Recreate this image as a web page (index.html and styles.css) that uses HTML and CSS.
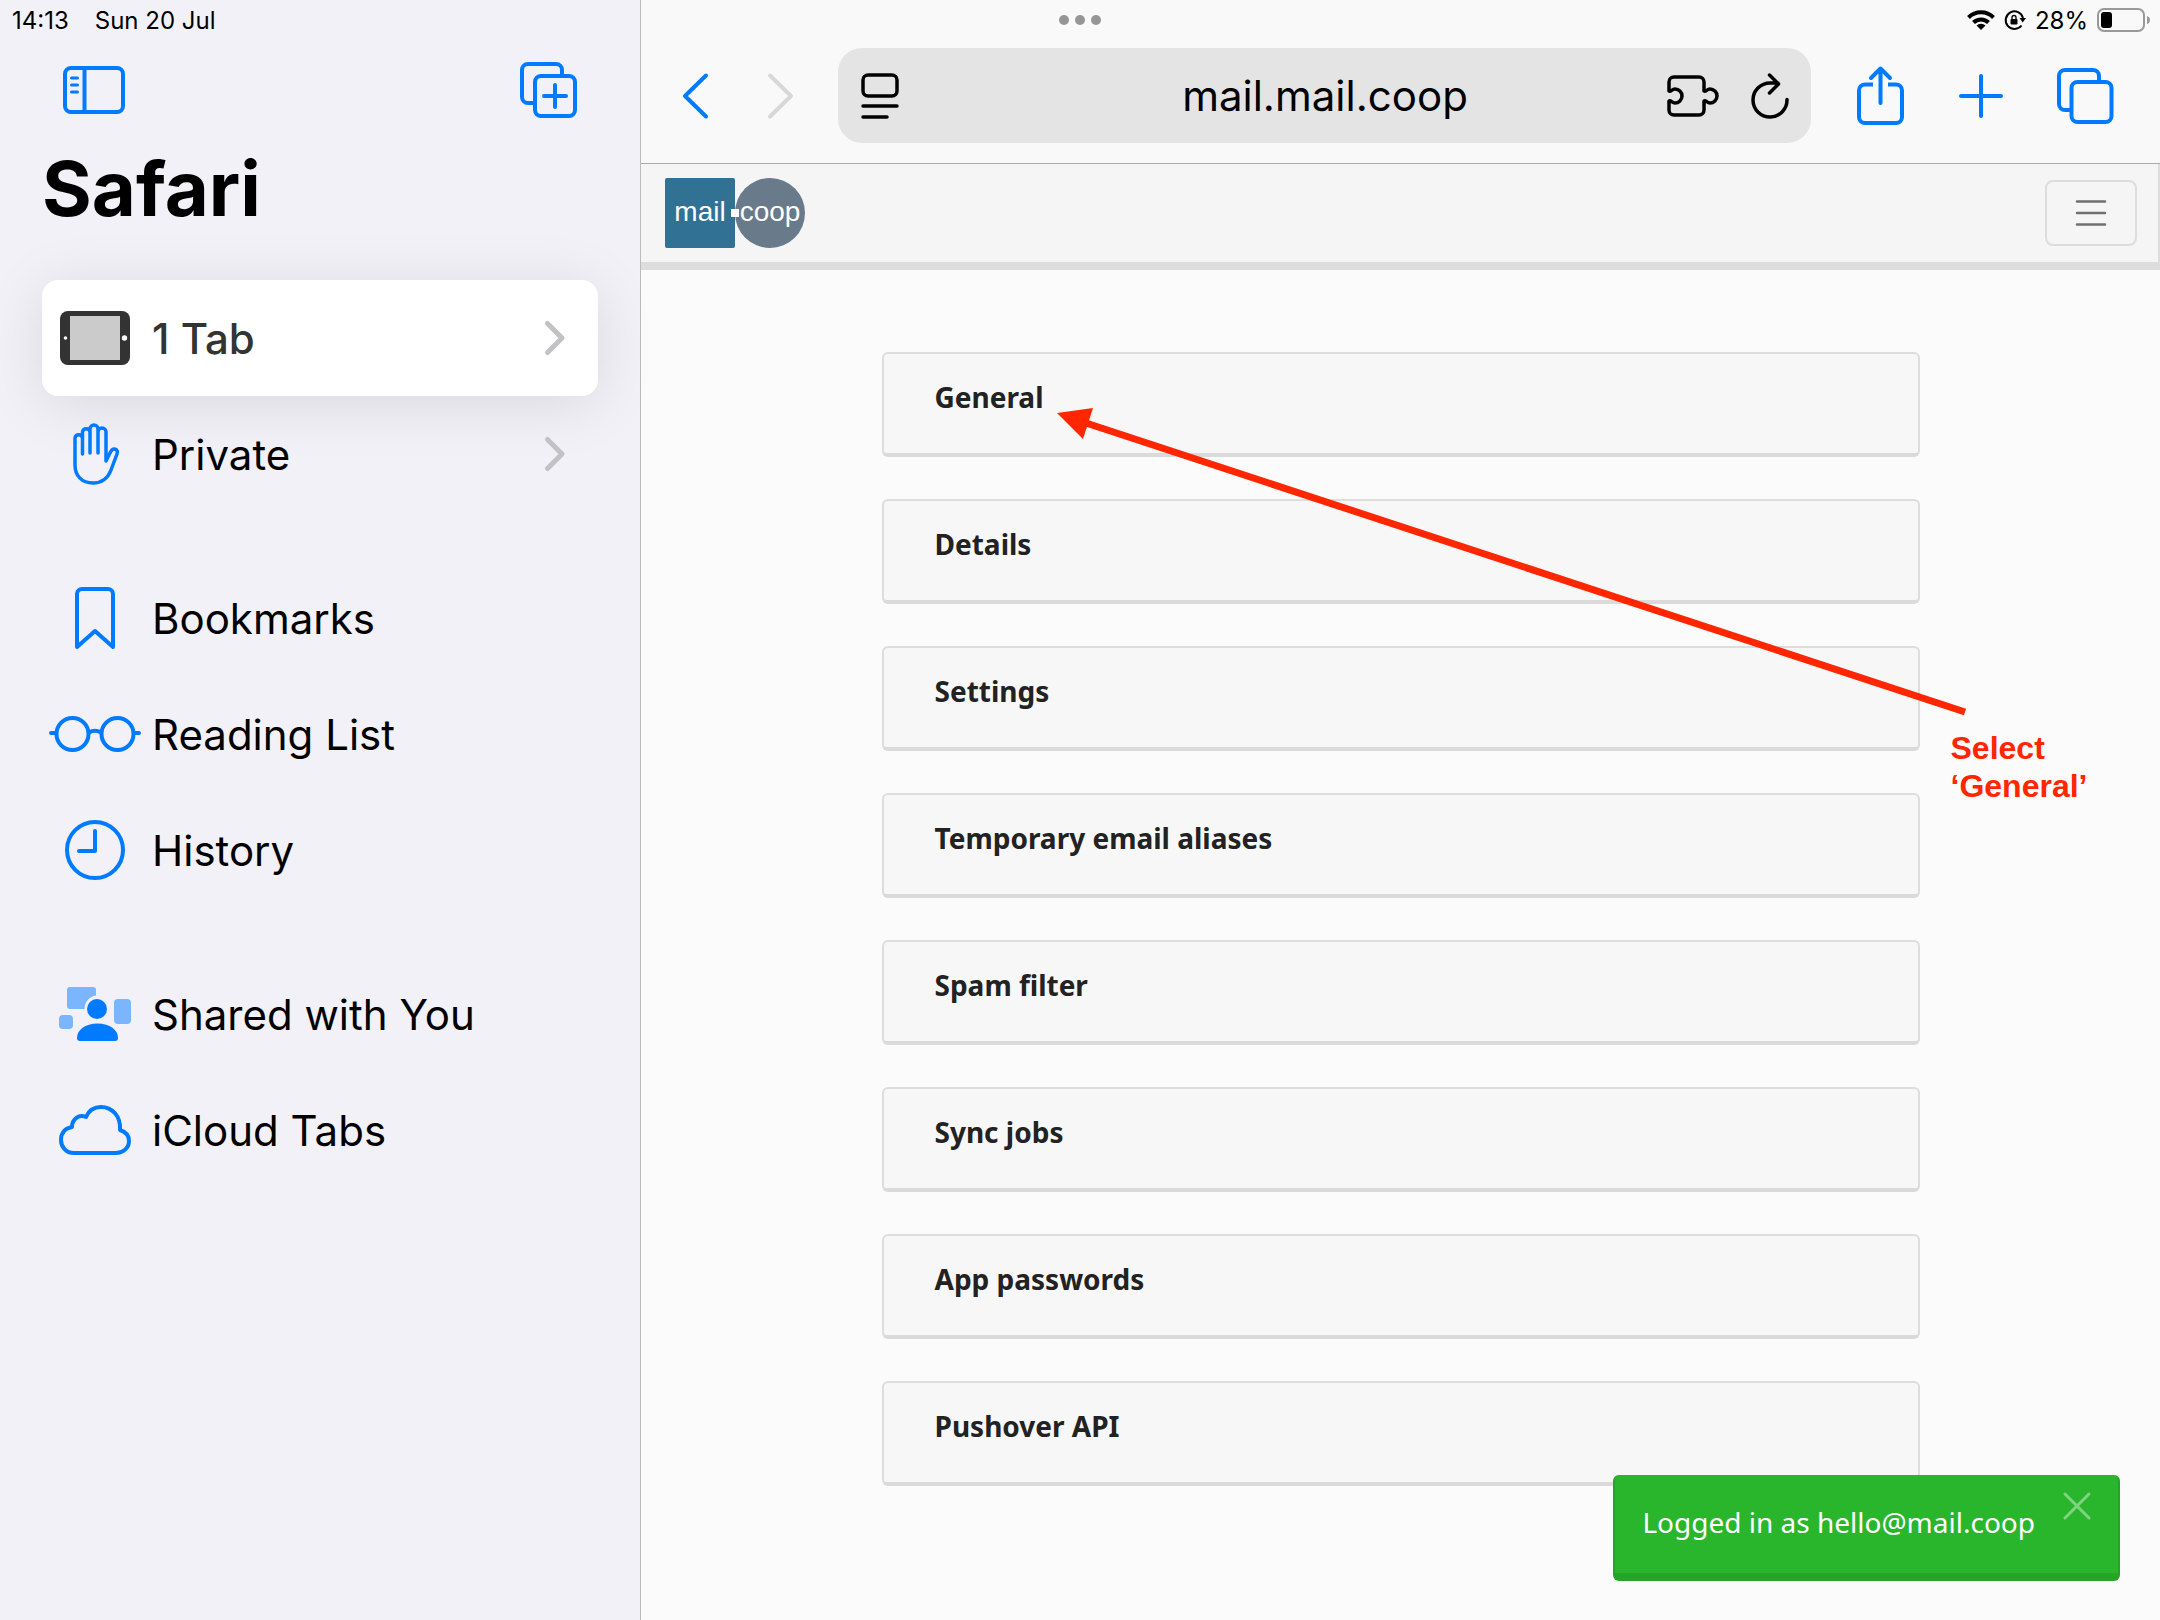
FILE: index.html
```html
<!DOCTYPE html>
<html lang="en">
<head>
    <meta charset="UTF-8">
    <meta name="viewport" content="width=device-width, initial-scale=1.0">
    <title>mail.mail.coop</title>
    <link rel="stylesheet" href="styles.css">
</head>
<body>
    <div class="app">
        <aside class="sidebar">
            <div class="status">
                <span>14:13</span>
                <span>Sun 20 Jul</span>
            </div>
            <div class="sidebar-tools">
                <button class="icon-btn" aria-label="Hide sidebar">
                    <svg width="62" height="48" viewBox="0 0 62 48" fill="none" stroke="currentColor" stroke-width="4">
                        <rect x="2" y="2" width="58" height="44" rx="6"/>
                        <path d="M21.500 2v44"/>
                        <path d="M8.500 12h6M8.500 19h6M8.500 26h6" stroke-width="3" stroke-linecap="round"/>
                    </svg>
                </button>
                <button class="icon-btn" aria-label="New tab group">
                    <svg width="58" height="56" viewBox="0 0 58 56" fill="none" stroke="currentColor" stroke-width="4">
                        <path d="M14 41H8a6 6 0 0 1-6-6V8a6 6 0 0 1 6-6h28a6 6 0 0 1 6 6v5"/>
                        <rect x="15" y="14" width="40" height="40" rx="6"/>
                        <path d="M35 23v22M24 34h22" stroke-linecap="round"/>
                    </svg>
                </button>
            </div>
            <h1>Safari</h1>
            <nav>
                <ul class="menu">
                    <li>
                        <a class="menu-item active" href="#tabs">
                            <svg width="70" height="54" viewBox="0 0 70 54">
                                <rect width="70" height="54" rx="8" fill="#333"/>
                                <rect x="10" y="5" width="50" height="44" fill="#cbcbcb"/>
                                <circle cx="5.500" cy="27" r="1.800" fill="#fff"/>
                                <circle cx="64.500" cy="27" r="2.700" fill="#fff"/>
                            </svg>
                            <span>1 Tab</span>
                            <svg class="chevron" width="20" height="34" viewBox="0 0 20 34"><path d="M2.500 2.500L17 17L2.500 31.500"/></svg>
                        </a>
                    </li>
                    <li>
                        <a class="menu-item" href="#private">
                            <svg class="line thin" width="46" height="62" viewBox="-1 0 46 62">
                                <path d="M9.500 31V15a3.800 3.800 0 0 0-7.500 0V42C2 53 9 60 20 60C30 60 35 55 38 47L44 31c2-5-4-7-6.500-2L33 38V9a4 4 0 0 0-8 0M25 30V6a4 4 0 0 0-8 0V30M17 9a3.800 3.800 0 0 0-7.500 0V20"/>
                            </svg>
                            <span>Private</span>
                            <svg class="chevron" width="20" height="34" viewBox="0 0 20 34"><path d="M2.500 2.500L17 17L2.500 31.500"/></svg>
                        </a>
                    </li>
                </ul>
                <ul class="menu">
                    <li>
                        <a class="menu-item" href="#bookmarks">
                            <svg class="line" width="40" height="62" viewBox="0 0 40 62">
                                <path d="M2 60V7a5 5 0 0 1 5-5h26a5 5 0 0 1 5 5v53L20 44z"/>
                            </svg>
                            <span>Bookmarks</span>
                        </a>
                    </li>
                    <li>
                        <a class="menu-item" href="#reading-list">
                            <svg class="line" width="92" height="36" viewBox="0 0 92 36">
                                <circle cx="23.500" cy="18" r="16"/>
                                <circle cx="68.500" cy="18" r="16"/>
                                <path d="M2 17h5M85 17h5M40 16.500q6-3.500 12 0"/>
                            </svg>
                            <span>Reading List</span>
                        </a>
                    </li>
                    <li>
                        <a class="menu-item" href="#history">
                            <svg class="line" width="60" height="60" viewBox="0 0 60 60">
                                <circle cx="30" cy="30" r="28"/>
                                <path d="M30 11v20H14"/>
                            </svg>
                            <span>History</span>
                        </a>
                    </li>
                </ul>
                <ul class="menu">
                    <li>
                        <a class="menu-item" href="#shared">
                            <svg width="72" height="54" viewBox="0 0 72 54" fill="#007aff">
                                <path d="M11 0h23a3 3 0 0 1 3 3v5.500A13.500 13.500 0 0 0 25.500 22H11a3 3 0 0 1-3-3V3a3 3 0 0 1 3-3z" fill="#7ab5fe"/>
                                <rect x="55" y="12" width="17" height="25" rx="4" fill="#7ab5fe"/>
                                <rect y="28" width="14" height="14" rx="4" fill="#7ab5fe"/>
                                <circle cx="38" cy="22" r="10"/>
                                <path d="M21 54a3 3 0 0 1-3-3c0-8 8-14.500 20.500-14.500S59 43 59 51a3 3 0 0 1-3 3z"/>
                            </svg>
                            <span>Shared with You</span>
                        </a>
                    </li>
                    <li>
                        <a class="menu-item" href="#icloud">
                            <svg class="line" width="72" height="50" viewBox="0 0 72 50">
                                <path d="M15 48C7 48 2 42 2 35c0-7 4-12 11-13c0-8 7-13 14-10C30 5 36 2 42 2c11 0 20 9 19 23c6 2 9 6 9 11c0 7-6 12-13 12z"/>
                            </svg>
                            <span>iCloud Tabs</span>
                        </a>
                    </li>
                </ul>
            </nav>
        </aside>

        <div class="browser">
            <header class="chrome">
                <div class="status status-right">
                    <svg class="dots" width="42" height="10" viewBox="0 0 42 10" fill="#969696">
                        <circle cx="5" cy="5" r="5"/><circle cx="21" cy="5" r="5"/><circle cx="37" cy="5" r="5"/>
                    </svg>
                    <svg width="28" height="20" viewBox="0 0 28 20" fill="none" stroke="#000" stroke-width="4">
                        <path d="M1.500 7.500a17.700 17.700 0 0 1 25 0M6.500 12.500a10.600 10.600 0 0 1 15 0"/>
                        <path d="M14 20l-4.500-4.500a6.400 6.400 0 0 1 9 0z" fill="#000" stroke="none"/>
                    </svg>
                    <svg width="22" height="20" viewBox="0 0 22 20" fill="none" stroke="#000" stroke-width="2">
                        <path d="M17.500 15.500A8.800 8.800 0 1 1 19 8"/>
                        <path d="M15.500 8h6.500l-3.300 4.500z" fill="#000" stroke="none"/>
                        <rect x="6.500" y="9" width="7" height="5.500" rx="1" fill="#000" stroke="none"/>
                        <path d="M8 9.500V7.500a2 2 0 0 1 4 0v2" stroke-width="1.300"/>
                    </svg>
                    <span>28%</span>
                    <svg width="54" height="24" viewBox="0 0 54 24">
                        <rect x="1" y="1" width="46" height="22" rx="6" fill="none" stroke="#999" stroke-width="2"/>
                        <rect x="4" y="4" width="11" height="16" rx="3"/>
                        <path d="M50 8v8q3-1 3-4t-3-4z" fill="#999"/>
                    </svg>
                </div>
                <div class="toolbar">
                    <button class="icon-btn" aria-label="Back">
                        <svg class="line" width="26" height="46" viewBox="0 0 26 46"><path d="M24 2.500L3 23L24 43.500"/></svg>
                    </button>
                    <button class="icon-btn forward" aria-label="Forward" disabled>
                        <svg class="line" width="26" height="46" viewBox="0 0 26 46"><path d="M2 2.500L23 23L2 43.500"/></svg>
                    </button>
                    <div class="address">
                        <button class="icon-btn dark" aria-label="Page menu">
                            <svg width="38" height="46" viewBox="0 0 38 46" fill="none" stroke="currentColor" stroke-width="3.500" stroke-linecap="round">
                                <rect x="2" y="2" width="34" height="21" rx="5"/>
                                <path d="M2 33h34M2 44h24"/>
                            </svg>
                        </button>
                        <input type="text" value="mail.mail.coop" aria-label="Address">
                        <button class="icon-btn dark" aria-label="Extensions">
                            <svg width="52" height="42" viewBox="0 0 52 42" fill="none" stroke="currentColor" stroke-width="3.500" stroke-linejoin="round">
                                <path d="M2 16V7a5 5 0 0 1 5-5h25a5 5 0 0 1 5 5v9c2 1 3-2 6-2a7 7 0 0 1 0 14c-3 0-4-3-6-2v9a5 5 0 0 1-5 5H7a5 5 0 0 1-5-5v-9c2-1 3 2 6 2a7 7 0 0 0 0-14c-3 0-4 3-6 2z"/>
                            </svg>
                        </button>
                        <button class="icon-btn dark" aria-label="Reload">
                            <svg width="38" height="46" viewBox="0 0 38 46" fill="none" stroke="currentColor" stroke-width="3.500" stroke-linecap="round" stroke-linejoin="round">
                                <path d="M36 26.500A17 17 0 1 1 19 10h8M18.500 2l9 9-9 9"/>
                            </svg>
                        </button>
                    </div>
                    <button class="icon-btn" aria-label="Share">
                        <svg class="line" width="48" height="60" viewBox="0 0 48 60">
                            <path d="M16 18.500H8a6 6 0 0 0-6 6V51a6 6 0 0 0 6 6h31a6 6 0 0 0 6-6V24.500a6 6 0 0 0-6-6h-8" stroke-linecap="butt"/>
                            <path d="M23.500 37V3M14 12l9.500-9.500L33 12"/>
                        </svg>
                    </button>
                    <button class="icon-btn" aria-label="New tab">
                        <svg class="line" width="44" height="44" viewBox="0 0 44 44"><path d="M22 2v40M2 22h40"/></svg>
                    </button>
                    <button class="icon-btn" aria-label="Show tabs">
                        <svg width="56" height="56" viewBox="0 0 56 56" fill="none" stroke="currentColor" stroke-width="4">
                            <path d="M14 42H8a6 6 0 0 1-6-6V8a6 6 0 0 1 6-6h28a6 6 0 0 1 6 6v5"/>
                            <rect x="14.500" y="14" width="40" height="40" rx="6"/>
                        </svg>
                    </button>
                </div>
            </header>

            <div class="navbar">
                <a class="logo" href="#home" aria-label="mail.coop">
                    <svg width="140" height="70" viewBox="0 0 140 70">
                        <rect width="70" height="70" rx="2" fill="#317194"/>
                        <circle cx="105" cy="35" r="35" fill="#697a8a"/>
                        <rect x="66" y="31" width="8" height="8" fill="#fff"/>
                    </svg>
                    <span class="logo-mail">mail</span>
                    <span class="logo-coop">coop</span>
                </a>
                <button class="menu-toggle" aria-label="Toggle navigation">
                    <svg width="32" height="26" viewBox="0 0 32 26" stroke="#707070" stroke-width="2.500" stroke-linecap="round"><path d="M2 1.500h28M2 13h28M2 24.500h28"/></svg>
                </button>
            </div>

            <main class="content">
                <a class="panel" href="#general">General</a>
                <a class="panel" href="#details">Details</a>
                <a class="panel" href="#settings">Settings</a>
                <a class="panel" href="#aliases">Temporary email aliases</a>
                <a class="panel" href="#spam">Spam filter</a>
                <a class="panel" href="#sync">Sync jobs</a>
                <a class="panel" href="#passwords">App passwords</a>
                <a class="panel" href="#pushover">Pushover API</a>

                <div class="callout">
                    <svg width="912" height="310" viewBox="0 0 912 310">
                        <path d="M26 11L908 301" stroke="#ff2600" stroke-width="7"/>
                        <path d="M0 2L36-3L26 28z" fill="#ff2600"/>
                    </svg>
                    <p>Select<br>‘General’</p>
                </div>
            </main>

            <div class="toast" role="status">
                <span>Logged in as hello@mail.coop</span>
                <button aria-label="Close">
                    <svg width="28" height="28" viewBox="0 0 28 28" stroke="currentColor" stroke-width="3" stroke-linecap="round"><path d="M2 2l24 24M26 2L2 26"/></svg>
                </button>
            </div>
        </div>
    </div>
</body>
</html>
```
FILE: styles.css
```css
:root {
    --blue: #007aff;
    --red: #ff2600;
    --sidebar-bg: #f2f1f7;
    --page-bg: #fbfbfb;
    --border: #dddddd;
}

* {
    box-sizing: border-box;
}

body {
    margin: 0;
    font-family: Inter, sans-serif;
    color: #000;
    background-color: var(--page-bg);
}

svg {
    display: block;
    flex-shrink: 0;
    overflow: visible;
}

button {
    padding: 0;
    border: none;
    background: none;
    font: inherit;
}

a {
    color: inherit;
    text-decoration: none;
}

.line {
    fill: none;
    stroke: currentColor;
    stroke-width: 4;
    stroke-linecap: round;
    stroke-linejoin: round;
}

.line.thin {
    stroke-width: 3.5;
}

.app {
    display: flex;
    min-height: 100vh;
}

/* Sidebar */
.sidebar {
    flex: 0 0 641px;
    padding: 0 42px;
    background-color: var(--sidebar-bg);
    border-right: 1px solid #bbb;
}

.status {
    display: flex;
    align-items: center;
    height: 40px;
    gap: 26px;
    font-size: 24px;
}

.sidebar .status {
    margin-left: -30px;
}

.sidebar-tools {
    display: flex;
    justify-content: space-between;
    align-items: center;
    height: 100px;
    padding: 0 20px 0 21px;
}

.icon-btn {
    color: var(--blue);
}

h1 {
    margin: 0 0 44px;
    font-size: 76px;
    line-height: 96px;
    font-weight: 700;
}

.menu {
    margin: 0 0 48px;
    padding: 0;
    list-style: none;
}

.menu-item {
    display: grid;
    grid-template-columns: 92px 1fr auto;
    align-items: center;
    justify-items: center;
    gap: 11px;
    height: 116px;
    padding: 0 33px 0 7px;
    border-radius: 16px;
    font-size: 42px;
}

.menu-item svg {
    color: var(--blue);
}

.menu-item span {
    justify-self: start;
}

.menu-item.active {
    color: #333;
    font-weight: 500;
    background-color: #fff;
    box-shadow: 0 8px 60px rgba(0, 0, 0, 0.1);
}

.chevron {
    fill: none;
    stroke: #c2c2c5;
    stroke-width: 5;
    stroke-linecap: round;
    stroke-linejoin: round;
}

/* Browser chrome */
.browser {
    flex: 1;
    display: flex;
    flex-direction: column;
    min-width: 0;
}

.chrome {
    height: 164px;
    background-color: #f9f9f9;
    border-bottom: 1px solid #aaa;
}

.status-right {
    position: relative;
    justify-content: flex-end;
    gap: 9px;
    padding-right: 9px;
}

.dots {
    position: absolute;
    left: 418px;
}

.toolbar {
    display: flex;
    align-items: center;
    gap: 54px;
    padding: 8px 47px 0 41px;
}

.forward {
    margin: 0 -10px 0 6px;
    color: #d8d8d8;
}

.address {
    flex: 1;
    display: flex;
    align-items: center;
    gap: 32px;
    min-width: 0;
    height: 95px;
    margin-right: -8px;
    padding: 0 22px 0 23px;
    border-radius: 24px;
    background-color: #e4e4e4;
}

.address input {
    flex: 1;
    min-width: 0;
    padding: 0 0 0 84px;
    border: none;
    background: none;
    font: inherit;
    font-size: 42px;
    text-align: center;
}

.dark {
    color: #000;
}

/* Page */
.navbar {
    display: flex;
    justify-content: space-between;
    align-items: center;
    height: 106px;
    padding: 0 21px 0 24px;
    background-color: #f5f5f5;
    border: 2px solid var(--border);
    border-width: 0 2px 8px 0;
}

.logo {
    position: relative;
    font-family: "Liberation Sans", sans-serif;
    color: #fff;
}

.logo span {
    position: absolute;
    top: 14px;
    width: 70px;
    text-align: center;
    font-size: 28px;
    line-height: 40px;
}

.logo-mail {
    left: 0;
}

.logo-coop {
    left: 70px;
}

.menu-toggle {
    padding: 18px 28px;
    border: 2px solid var(--border);
    border-radius: 8px;
}

.content {
    position: relative;
    display: flex;
    flex-direction: column;
    gap: 42px;
    width: 1038px;
    max-width: 100%;
    margin: 82px auto 0;
    font-family: "Noto Sans", sans-serif;
}

.panel {
    height: 105px;
    padding: 23px 51px;
    border: 2px solid var(--border);
    border-bottom: 4px solid #dadada;
    border-radius: 6px;
    background-color: #f7f7f7;
    color: #222;
    font-size: 28px;
    line-height: 40px;
    font-weight: 700;
}

.callout {
    position: absolute;
    top: 59px;
    left: 175px;
    color: var(--red);
}

.callout p {
    margin: 8px 0 0 894px;
    font-family: "Liberation Sans", sans-serif;
    font-size: 32px;
    line-height: 38px;
    font-weight: 700;
}

.toast {
    position: fixed;
    right: 40px;
    bottom: 39px;
    display: flex;
    gap: 28px;
    padding: 17px 27px 31px 27px;
    border: 2px solid #25a428;
    border-width: 0 2px 8px;
    border-radius: 6px;
    background-color: #29b62c;
    color: #fff;
    font-family: "Noto Sans", sans-serif;
    font-size: 28px;
    line-height: 40px;
}

.toast span {
    margin-top: 10px;
}

.toast button {
    align-self: flex-start;
    color: #7fd381;
}
```
